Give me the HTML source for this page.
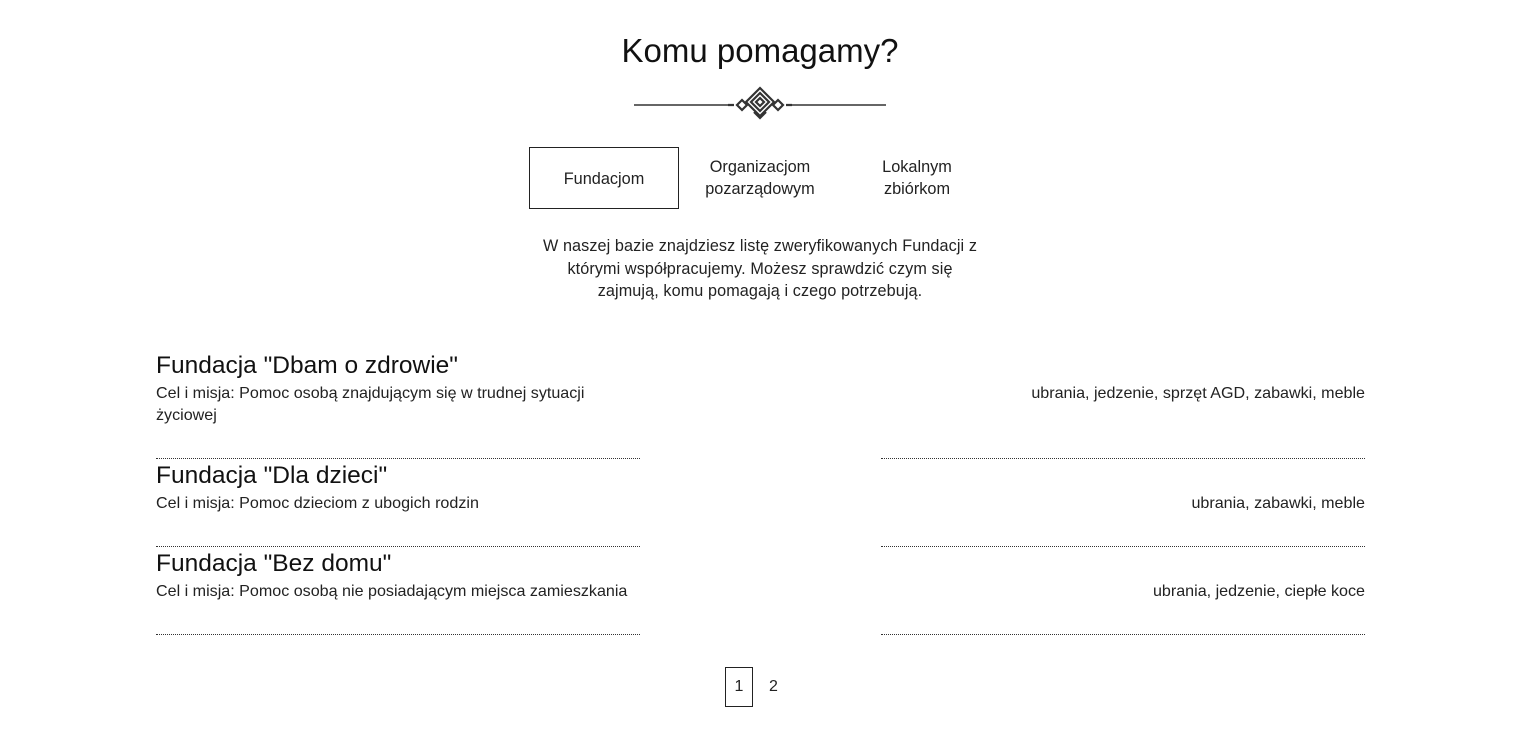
<!DOCTYPE html>
<html><head><meta charset="utf-8"><style>
body{margin:0;width:1518px;height:734px;background:#fff;font-family:"Liberation Sans",sans-serif;color:#222;position:relative;overflow:hidden}
.a{position:absolute;white-space:nowrap}
h1{position:absolute;left:0;width:1520px;top:32px;margin:0;text-align:center;font-weight:normal;font-size:33px;color:#111}
.tab{position:absolute;font-size:16.3px;text-align:center;line-height:22px;color:#222}
.desc{position:absolute;left:480px;width:560px;top:235px;text-align:center;font-size:16.2px;line-height:22.5px;letter-spacing:0.1px}
.t{font-size:24.5px;color:#111}
.s{font-size:16.1px;line-height:22px}
.line{position:absolute;border-top:1px dotted #333;width:484px}
</style></head><body>
<h1>Komu pomagamy?</h1>
<svg class="a" style="left:630px;top:84px" width="260" height="40" viewBox="0 0 260 40">
<line x1="4" y1="21" x2="104" y2="21" stroke="#333" stroke-width="1.5"/>
<line x1="156" y1="21" x2="256" y2="21" stroke="#333" stroke-width="1.5"/>
<g fill="none" stroke="#333" stroke-width="2.2">
<path d="M130 4 L144 18 L130 32 L116 18 Z"/>
<path d="M130 9 L139 18 L130 27 L121 18 Z"/>
<path d="M130 14 L134 18 L130 22 L126 18 Z"/>
<path d="M112 16 L117 21 L112 26 L107 21 Z"/>
<path d="M148 16 L153 21 L148 26 L143 21 Z"/>
<path d="M124 28 L130 34 L136 28"/>
<path d="M98 21 L104 21 M156 21 L162 21"/>
</g></svg>
<div class="a" style="left:529px;top:147px;width:148px;height:60px;border:1px solid #222"></div>
<div class="tab" style="left:529px;top:168px;width:150px">Fundacjom</div>
<div class="tab" style="left:680px;top:156px;width:160px">Organizacjom<br>pozarządowym</div>
<div class="tab" style="left:850px;top:156px;width:134px">Lokalnym<br>zbiórkom</div>
<div class="desc">W naszej bazie znajdziesz listę zweryfikowanych Fundacji z<br>którymi współpracujemy. Możesz sprawdzić czym się<br>zajmują, komu pomagają i czego potrzebują.</div>

<div class="a t" style="left:156px;top:352px">Fundacja "Dbam o zdrowie"</div>
<div class="a s" style="left:156px;top:382px">Cel i misja: Pomoc osobą znajdującym się w trudnej sytuacji<br>życiowej</div>
<div class="a s" style="right:153px;top:382px">ubrania, jedzenie, sprzęt AGD, zabawki, meble</div>
<div class="line" style="left:156px;top:458px"></div><div class="line" style="left:881px;top:458px"></div>

<div class="a t" style="left:156px;top:462px">Fundacja "Dla dzieci"</div>
<div class="a s" style="left:156px;top:492px">Cel i misja: Pomoc dzieciom z ubogich rodzin</div>
<div class="a s" style="right:153px;top:492px">ubrania, zabawki, meble</div>
<div class="line" style="left:156px;top:546px"></div><div class="line" style="left:881px;top:546px"></div>

<div class="a t" style="left:156px;top:550px">Fundacja "Bez domu"</div>
<div class="a s" style="left:156px;top:580px">Cel i misja: Pomoc osobą nie posiadającym miejsca zamieszkania</div>
<div class="a s" style="right:153px;top:580px">ubrania, jedzenie, ciepłe koce</div>
<div class="line" style="left:156px;top:634px"></div><div class="line" style="left:881px;top:634px"></div>

<div class="a" style="left:725px;top:667px;width:26px;height:38px;border:1px solid #222;text-align:center;line-height:38px;font-size:16px">1</div>
<div class="a" style="left:769px;top:667px;line-height:40px;font-size:16px">2</div>
</body></html>
